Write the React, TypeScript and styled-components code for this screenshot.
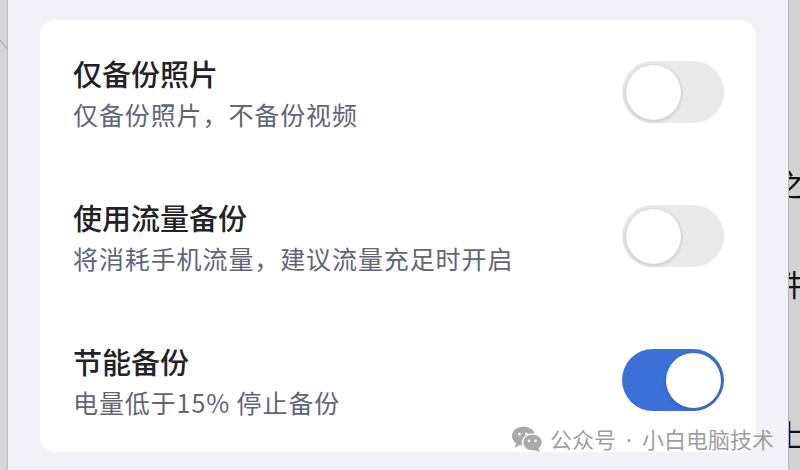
import React from "react";
import styled, { createGlobalStyle } from "styled-components";

const GlobalStyle = createGlobalStyle`
    html, body {
        margin: 0;
        padding: 0;
        width: 800px;
        height: 470px;
        overflow: hidden;
        background: #d3d3d3;
        font-family: "Noto Sans CJK SC", "Noto Sans", sans-serif;
    }
`;

const Screen = styled.div`
    display: flex;
    flex-direction: row;
    width: 800px;
    height: 470px;
`;

const LeftEdge = styled.div`
    width: 7px;
    height: 100%;
    background: #d5d5d5;
    border-right: 1px solid #bcbcbc;
    overflow: hidden;
`;

const RightEdge = styled.div`
    width: 11px;
    height: 100%;
    background: #d2d2d2;
    border-left: 1px solid #b8b8b8;
    overflow: hidden;
    display: flex;
    flex-direction: column;
`;

const Fragment = styled.div<{ $top: number }>`
    margin-top: ${(p) => p.$top}px;
    margin-left: -14px;
    font-size: 30px;
    line-height: 30px;
    color: #111;
    white-space: nowrap;
`;

const Panel = styled.div`
    flex: 1;
    height: 100%;
    background: #f2f3f8;
    padding: 20px 32px 0 32px;
    box-sizing: border-box;
    position: relative;
`;

const Card = styled.div`
    background: #ffffff;
    border-radius: 16px;
    height: 432px;
    display: flex;
    flex-direction: column;
    padding: 0 32px 0 33px;
`;

const Row = styled.div`
    display: flex;
    flex-direction: row;
    align-items: center;
    justify-content: space-between;
    height: 144px;
`;

const TextBlock = styled.div`
    display: flex;
    flex-direction: column;
    gap: 7px;
    padding-top: 2px;
`;

const Title = styled.div`
    font-size: 29px;
    line-height: 34px;
    font-weight: 500;
    color: #222226;
`;

const Subtitle = styled.div`
    font-size: 25px;
    line-height: 34px;
    letter-spacing: 0.9px;
    color: #5e6678;
`;

const Track = styled.div<{ $on: boolean }>`
    width: 102px;
    height: 62px;
    border-radius: 31px;
    box-sizing: border-box;
    padding: 0 3.5px;
    display: flex;
    align-items: center;
    justify-content: ${(p) => (p.$on ? "flex-end" : "flex-start")};
    background: ${(p) => (p.$on ? "#3a70d8" : "#e9e9ec")};
`;

const Knob = styled.div`
    width: 55px;
    height: 55px;
    border-radius: 50%;
    background: #ffffff;
    box-shadow: 0 1px 4px rgba(0, 0, 0, 0.18), 0 0 1px rgba(0, 0, 0, 0.12);
`;

const Watermark = styled.div`
    position: absolute;
    right: 14px;
    bottom: 18px;
    display: flex;
    align-items: center;
    gap: 7px;
    font-size: 22px;
    line-height: 26px;
    color: rgba(140, 140, 140, 0.85);
`;

const Dot = styled.span`
    font-family: "Noto Sans", sans-serif;
    margin: 0 10px;
`;

const WeChatIcon = () => (
    <svg width="31" height="26" viewBox="0 0 31 26">
        <ellipse cx="11.5" cy="10" rx="11.5" ry="9.5" fill="#a9a9a9" />
        <path d="M4 17 L3 22 L9 18 Z" fill="#a9a9a9" />
        <ellipse cx="20.5" cy="16.5" rx="10" ry="8.5" fill="#a9a9a9" stroke="#f7f7f7" strokeWidth="1.5" />
        <path d="M26 22 L28 26 L22 24 Z" fill="#a9a9a9" />
        <circle cx="7.5" cy="8" r="1.6" fill="#f4f4f4" />
        <circle cx="14.5" cy="8" r="1.6" fill="#f4f4f4" />
        <circle cx="17" cy="15" r="1.4" fill="#f4f4f4" />
        <circle cx="23.5" cy="15" r="1.4" fill="#f4f4f4" />
    </svg>
);

type Setting = { title: string; desc: string; on: boolean };

const settings: Setting[] = [
    { title: "仅备份照片", desc: "仅备份照片，不备份视频", on: false },
    { title: "使用流量备份", desc: "将消耗手机流量，建议流量充足时开启", on: false },
    { title: "节能备份", desc: "电量低于15% 停止备份", on: true },
];

const App = () => {
    return (
        <Screen>
            <GlobalStyle />
            <LeftEdge>
                <svg width="8" height="60" viewBox="0 0 8 60">
                    <line x1="0" y1="40" x2="8" y2="50" stroke="#9a9a9a" strokeWidth="1" />
                </svg>
            </LeftEdge>
            <Panel>
                <Card>
                    {settings.map((s) => (
                        <Row key={s.title}>
                            <TextBlock>
                                <Title>{s.title}</Title>
                                <Subtitle>{s.desc}</Subtitle>
                            </TextBlock>
                            <Track $on={s.on}>
                                <Knob />
                            </Track>
                        </Row>
                    ))}
                </Card>
                <Watermark>
                    <WeChatIcon />
                    <span>
                        公众号<Dot>·</Dot>小白电脑技术
                    </span>
                </Watermark>
            </Panel>
            <RightEdge>
                <Fragment $top={168}>之</Fragment>
                <Fragment $top={70}>件</Fragment>
                <Fragment $top={40}>。</Fragment>
                <Fragment $top={50}>上</Fragment>
            </RightEdge>
        </Screen>
    );
};

export default App;
